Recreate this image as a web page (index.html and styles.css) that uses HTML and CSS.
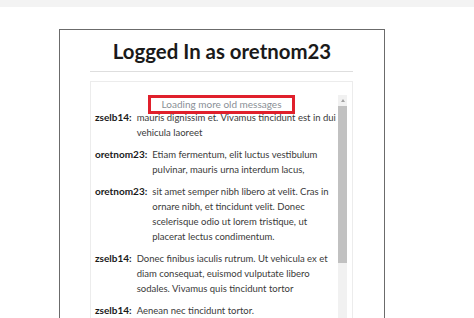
FILE: index.html
```html
<!DOCTYPE html>
<html>
<head>
<meta charset="utf-8">
<link rel="stylesheet" href="styles.css">
</head>
<body>
<div class="topbar"></div>
<div class="card">
  <h1 class="title">Logged In as oretnom23</h1>
  <div class="rule"></div>
  <div class="chat">
    <div class="loading"><span class="loading-text">Loading more old messages</span></div>
    <div class="chat-inner">
      <div class="messages">
        <div class="msg"><span class="name">zselb14:</span><span class="text">mauris dignissim et. Vivamus tincidunt est in dui vehicula laoreet</span></div>
        <div class="msg"><span class="name">oretnom23:</span><span class="text">Etiam fermentum, elit luctus vestibulum pulvinar, mauris urna interdum lacus,</span></div>
        <div class="msg"><span class="name">oretnom23:</span><span class="text">sit amet semper nibh libero at velit. Cras in ornare nibh, et tincidunt velit. Donec scelerisque odio ut lorem tristique, ut placerat lectus condimentum.</span></div>
        <div class="msg"><span class="name">zselb14:</span><span class="text">Donec finibus iaculis rutrum. Ut vehicula ex et diam consequat, euismod vulputate libero sodales. Vivamus quis tincidunt tortor</span></div>
        <div class="msg"><span class="name">zselb14:</span><span class="text">Aenean nec tincidunt tortor.</span></div>
      </div>
      <div class="scrollbar">
        <div class="arrow"></div>
        <div class="thumb"></div>
      </div>
    </div>
  </div>
</div>
</body>
</html>
```
FILE: styles.css
```css
html, body {
  margin: 0;
  padding: 0;
  height: 318px;
  overflow: hidden;
  background: #fff;
  font-family: "Lato", "Open Sans", sans-serif;
  color: #212529;
}
.topbar {
  height: 7px;
  background: #f3f3f3;
}
.card {
  margin: 22px 0 0 59px;
  width: 324px;
  height: 400px;
  border: 1px solid #6b6b6b;
}
.title {
  margin: 8px 0 0 0;
  text-align: center;
  font-size: 20.4px;
  line-height: 26px;
  font-weight: 700;
  color: #1a1a1a;
}
.rule {
  margin: 7px 31px 0 30px;
  height: 1px;
  background: #dedede;
}
.chat {
  position: relative;
  margin: 9px 31px 0 30px;
  height: 400px;
  border: 1px solid #ececec;
  padding: 13px 5px 0 4px;
}
.loading {
  position: absolute;
  top: 13px;
  left: 0;
  right: 0;
  display: flex;
  justify-content: center;
  z-index: 1;
}
.loading-text {
  display: block;
  width: 141px;
  height: 13px;
  border: 3px solid #e0202c;
  background: #fff;
  text-align: center;
  font-size: 10px;
  line-height: 13px;
  color: #8a8f96;
}
.chat-inner {
  display: flex;
  height: 300px;
}
.messages {
  flex: 1;
  padding: 15px 0 0 0;
  font-size: 9.5px;
  line-height: 15px;
}
.msg {
  display: flex;
  gap: 5px;
  margin-bottom: 7px;
}
.name {
  font-weight: 700;
  font-size: 10px;
  flex: none;
  color: #1a1a1a;
}
.text {
  flex: 1;
  color: #3a3a3a;
}
.scrollbar {
  width: 9px;
  flex: none;
  background: #f1f1f1;
  display: flex;
  flex-direction: column;
  align-items: center;
}
.arrow {
  margin-top: 4px;
  width: 0;
  height: 0;
  border-left: 2.5px solid transparent;
  border-right: 2.5px solid transparent;
  border-bottom: 3px solid #a3a3a3;
}
.thumb {
  margin-top: 4px;
  width: 9px;
  height: 157px;
  background: #c1c1c1;
}
```
